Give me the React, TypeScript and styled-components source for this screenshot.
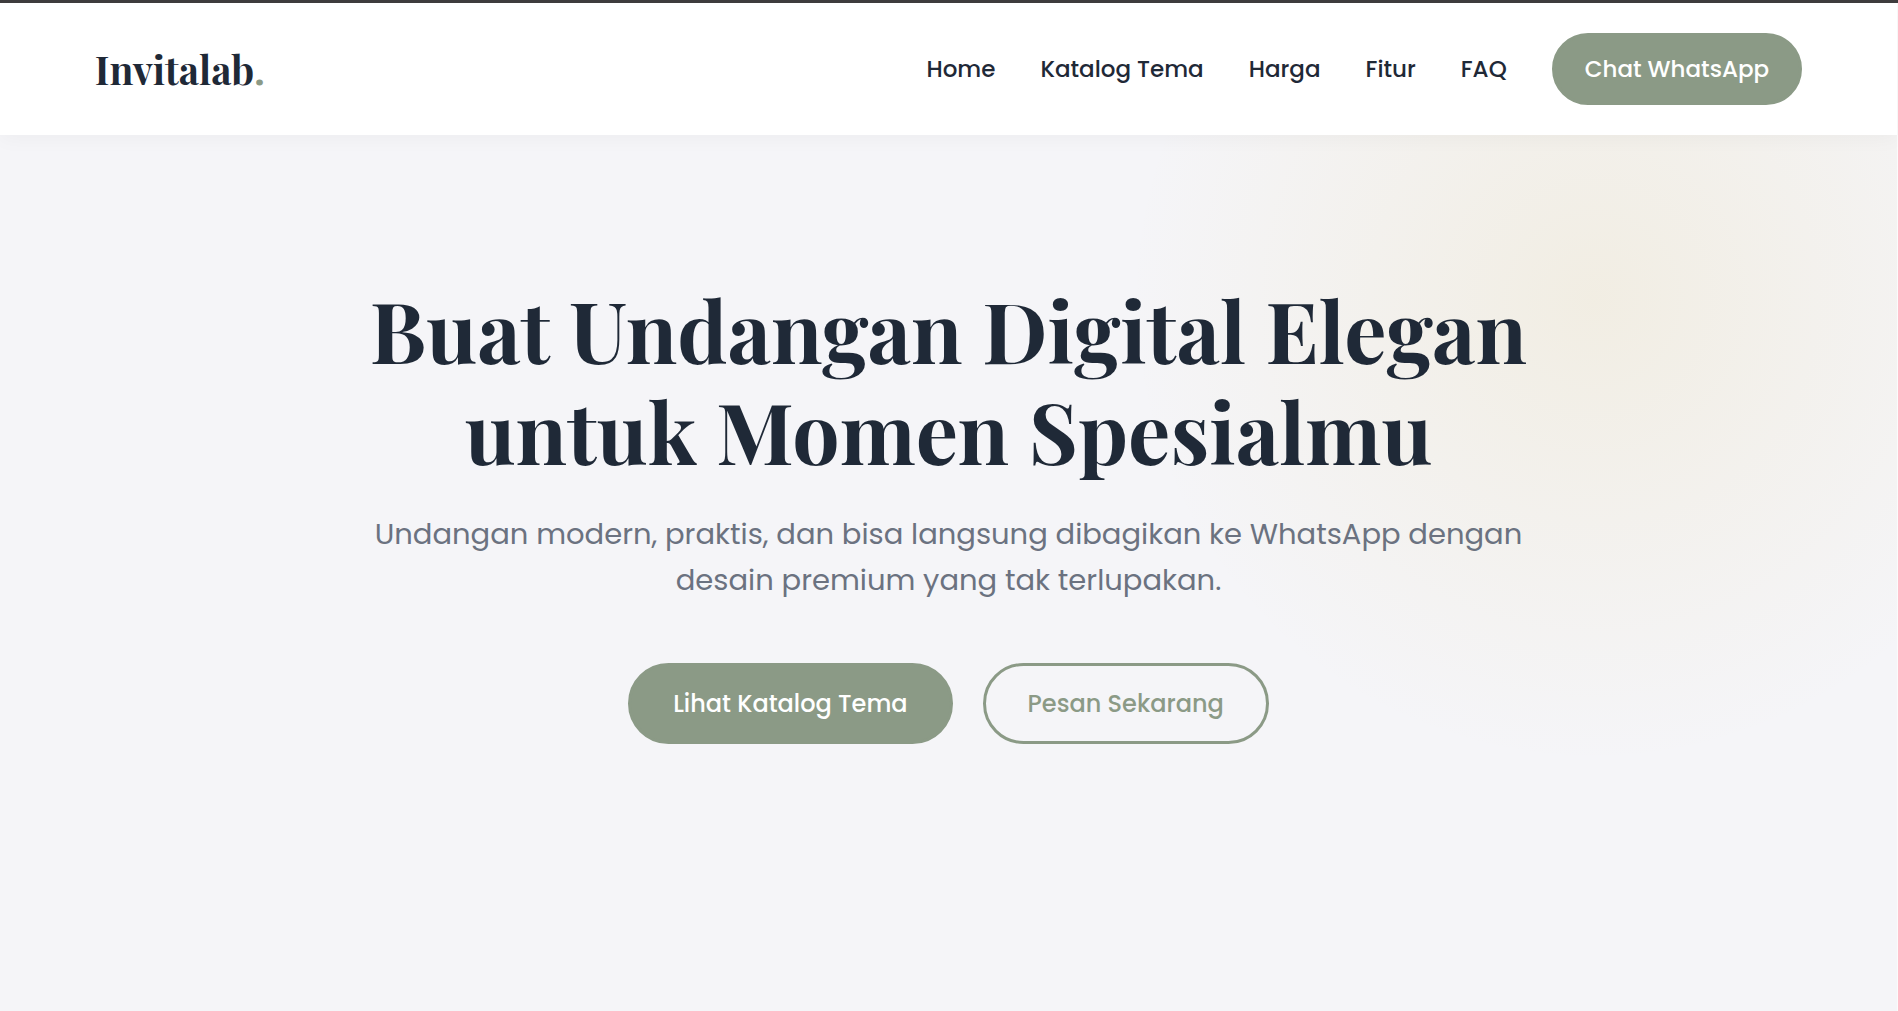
import React from "react";
import styled, { createGlobalStyle, css } from "styled-components";

const color = {
  navy: "#1f2937",
  sage: "#8b9a86",
  grey: "#6b7280",
  mist: "#f5f5f8",
  gold: "212, 175, 55",
};

const serif = `"Playfair Display", "Liberation Serif", serif`;
const sans = `Poppins, Inter, "Liberation Sans", sans-serif`;

const GlobalStyle = createGlobalStyle`
  *, *::before, *::after { box-sizing: border-box; }
  html, body { margin: 0; }
  body {
    background: ${color.mist};
    color: ${color.navy};
    font-family: ${sans};
  }
  a { color: inherit; text-decoration: none; }
`;

const Page = styled.div`
  display: flex;
  flex-direction: column;
  min-height: 100vh;
  border-top: 3px solid #3f3d3e;
`;

const Frame = styled.div`
  flex: 1;
  display: flex;
  flex-direction: column;
  border-right: 1px solid #fbfbfb;
`;

const Header = styled.header`
  position: relative;
  z-index: 1;
  display: flex;
  align-items: center;
  justify-content: space-between;
  padding: 30px 5%;
  background: #fff;
  box-shadow: 0 3px 20px rgba(0, 0, 0, 0.04);
`;

const Logo = styled.a`
  font: 700 39px/48px ${serif};
`;

const LogoDot = styled.span`
  color: ${color.sage};
`;

const Nav = styled.nav`
  display: flex;
  align-items: center;
  gap: 45px;
`;

const NavLink = styled.a`
  font-size: 23px;
  line-height: 36px;
  font-weight: 500;
`;

const pill = css`
  display: inline-flex;
  align-items: center;
  justify-content: center;
  border: 3px solid ${color.sage};
  border-radius: 50px;
  line-height: 36px;
  font-weight: 500;
  white-space: nowrap;
`;

const ChatLink = styled.a`
  ${pill}
  padding: 15px 30px;
  background: ${color.sage};
  color: #fff;
  font-size: 23px;
`;

const Hero = styled.section`
  flex: 1;
  padding: 144px 5%;
  text-align: center;
  background: radial-gradient(
    circle 465px at 84% 164px,
    rgba(${color.gold}, 0.11),
    rgba(${color.gold}, 0)
  );
`;

const Title = styled.h1`
  max-width: 1200px;
  margin: 0 auto 30px;
  font: 700 84px/101px ${serif};
`;

const Lead = styled.p`
  max-width: 1200px;
  margin: 0 auto 60px;
  color: ${color.grey};
  font-size: 29px;
  line-height: 46px;
`;

const Actions = styled.div`
  display: flex;
  justify-content: center;
  flex-wrap: wrap;
  gap: 30px;
`;

const ActionLink = styled.a<{ $filled?: boolean }>`
  ${pill}
  min-height: 81px;
  padding: 18px 42px;
  font-size: 24px;
  background: ${(p) => (p.$filled ? color.sage : "transparent")};
  color: ${(p) => (p.$filled ? "#fff" : color.sage)};
`;

const links = [
  { label: "Home", href: "#home" },
  { label: "Katalog Tema", href: "#katalog" },
  { label: "Harga", href: "#harga" },
  { label: "Fitur", href: "#fitur" },
  { label: "FAQ", href: "#faq" },
];

export default function App() {
  return (
    <Page>
      <GlobalStyle />
      <Frame>
        <Header>
          <Logo href="#home">
            Invitalab<LogoDot>.</LogoDot>
          </Logo>
          <Nav>
            {links.map((link) => (
              <NavLink key={link.href} href={link.href}>
                {link.label}
              </NavLink>
            ))}
            <ChatLink href="#chat">Chat WhatsApp</ChatLink>
          </Nav>
        </Header>
        <Hero id="home">
          <Title>
            Buat Undangan Digital Elegan
            <br />
            untuk Momen Spesialmu
          </Title>
          <Lead>
            Undangan modern, praktis, dan bisa langsung dibagikan ke WhatsApp dengan desain premium
            yang tak terlupakan.
          </Lead>
          <Actions>
            <ActionLink href="#katalog" $filled>
              Lihat Katalog Tema
            </ActionLink>
            <ActionLink href="#pesan">Pesan Sekarang</ActionLink>
          </Actions>
        </Hero>
      </Frame>
    </Page>
  );
}
